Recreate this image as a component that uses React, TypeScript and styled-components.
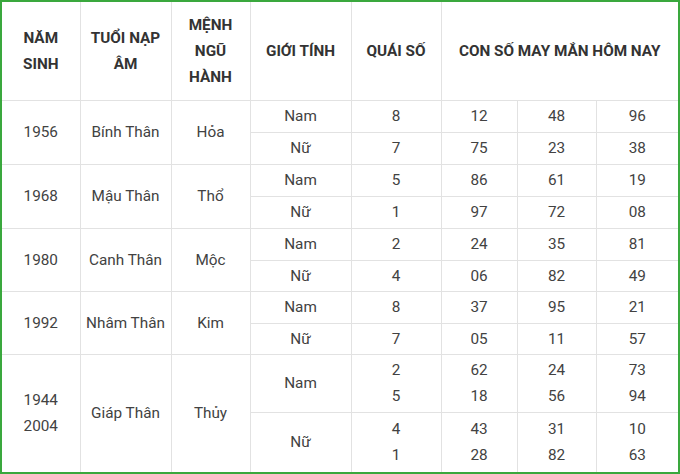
import React from "react";
import styled, { createGlobalStyle } from "styled-components";

const Global = createGlobalStyle`
  html, body { margin: 0; padding: 0; background: #ffffff; }
  body { font-family: Roboto, "Noto Sans", "Liberation Sans", sans-serif; }
`;

const Frame = styled.div`
  width: 680px;
  height: 474px;
  box-sizing: border-box;
  border: 2px solid #3aa83d;
  background: #fff;
  overflow: hidden;
`;

const Table = styled.table`
  width: 100%;
  border-collapse: collapse;
  border-style: hidden;
  table-layout: fixed;
  font-size: 15.3px;
  color: #424242;
`;

const Head = styled.th`
  border: 1px solid #e2e2e2;
  font-weight: 700;
  color: #333333;
  line-height: 26px;
  text-align: center;
  vertical-align: middle;
  padding: 0 4px;
`;

const Cell = styled.td`
  border: 1px solid #e2e2e2;
  text-align: center;
  vertical-align: middle;
  line-height: 26px;
  padding: 0 4px;
  font-weight: 400;
`;

const Row = styled.tr<{ $h: number }>`
  height: ${(p) => p.$h}px;
`;

type Sub = { g: string; q: string[]; n: string[][] };
type Group = { years: string[]; tuoi: string; menh: string; subs: Sub[]; h: number[] };

const groups: Group[] = [
  {
    years: ["1956"], tuoi: "Bính Thân", menh: "Hỏa", h: [32, 32],
    subs: [
      { g: "Nam", q: ["8"], n: [["12"], ["48"], ["96"]] },
      { g: "Nữ", q: ["7"], n: [["75"], ["23"], ["38"]] },
    ],
  },
  {
    years: ["1968"], tuoi: "Mậu Thân", menh: "Thổ", h: [32, 32],
    subs: [
      { g: "Nam", q: ["5"], n: [["86"], ["61"], ["19"]] },
      { g: "Nữ", q: ["1"], n: [["97"], ["72"], ["08"]] },
    ],
  },
  {
    years: ["1980"], tuoi: "Canh Thân", menh: "Mộc", h: [32, 31],
    subs: [
      { g: "Nam", q: ["2"], n: [["24"], ["35"], ["81"]] },
      { g: "Nữ", q: ["4"], n: [["06"], ["82"], ["49"]] },
    ],
  },
  {
    years: ["1992"], tuoi: "Nhâm Thân", menh: "Kim", h: [32, 31],
    subs: [
      { g: "Nam", q: ["8"], n: [["37"], ["95"], ["21"]] },
      { g: "Nữ", q: ["7"], n: [["05"], ["11"], ["57"]] },
    ],
  },
  {
    years: ["1944", "2004"], tuoi: "Giáp Thân", menh: "Thủy", h: [58, 60],
    subs: [
      { g: "Nam", q: ["2", "5"], n: [["62", "18"], ["24", "56"], ["73", "94"]] },
      { g: "Nữ", q: ["4", "1"], n: [["43", "28"], ["31", "82"], ["10", "63"]] },
    ],
  },
];

const widths = [78, 91, 79, 101, 90, 76, 79, 82];

const Lines: React.FC<{ items: string[] }> = ({ items }) => (
  <>
    {items.map((t, i) => (
      <React.Fragment key={i}>
        {i > 0 && <br />}
        {t}
      </React.Fragment>
    ))}
  </>
);

export default function App() {
  return (
    <>
      <Global />
      <Frame>
        <Table>
          <colgroup>
            {widths.map((w, i) => (
              <col key={i} style={{ width: w }} />
            ))}
          </colgroup>
          <thead>
            <Row $h={98}>
              <Head>NĂM<br />SINH</Head>
              <Head>TUỔI NẠP<br />ÂM</Head>
              <Head>MỆNH<br />NGŨ<br />HÀNH</Head>
              <Head>GIỚI TÍNH</Head>
              <Head>QUÁI SỐ</Head>
              <Head colSpan={3}>CON SỐ MAY MẮN HÔM NAY</Head>
            </Row>
          </thead>
          <tbody>
            {groups.map((g) =>
              g.subs.map((s, si) => (
                <Row $h={g.h[si]} key={g.tuoi + s.g}>
                  {si === 0 && (
                    <>
                      <Cell rowSpan={2}><Lines items={g.years} /></Cell>
                      <Cell rowSpan={2}>{g.tuoi}</Cell>
                      <Cell rowSpan={2}>{g.menh}</Cell>
                    </>
                  )}
                  <Cell>{s.g}</Cell>
                  <Cell><Lines items={s.q} /></Cell>
                  {s.n.map((n, ni) => (
                    <Cell key={ni}><Lines items={n} /></Cell>
                  ))}
                </Row>
              ))
            )}
          </tbody>
        </Table>
      </Frame>
    </>
  );
}
